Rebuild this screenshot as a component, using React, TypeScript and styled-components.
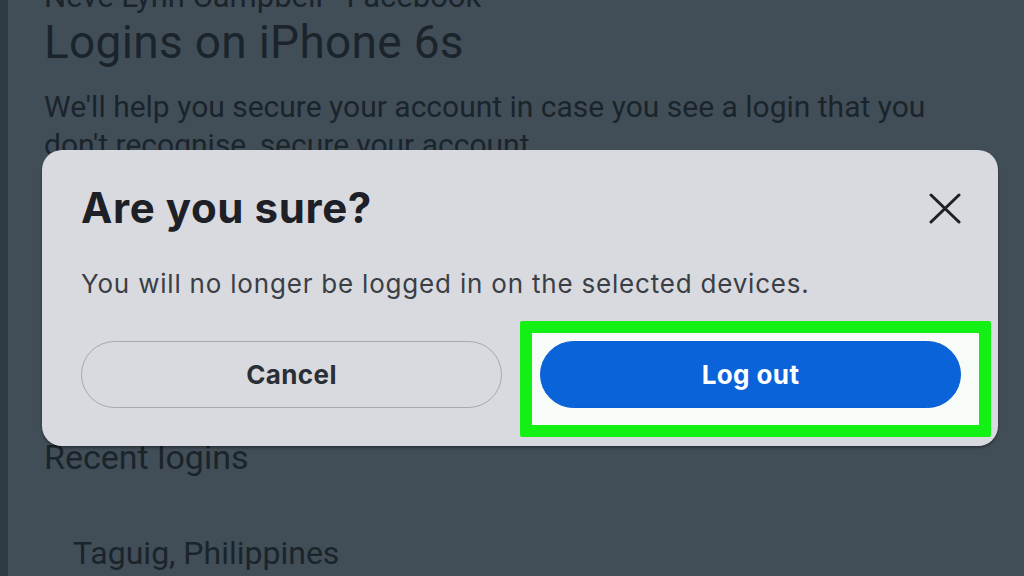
import React from 'react'
import styled, { createGlobalStyle } from 'styled-components'

const GlobalStyle = createGlobalStyle`
	html, body {
		margin: 0;
		padding: 0;
		background: #414e58;
	}
`

const Screen = styled.div`
	position: relative;
	width: 1024px;
	height: 576px;
	overflow: hidden;
	box-sizing: border-box;
	background: #414e58;
	border-left: 8px solid #2f3a42;
	font-family: Roboto, 'Liberation Sans', sans-serif;
	color: #1b242b;
`

const Page = styled.div`
	display: flex;
	flex-direction: column;
	padding-left: 36px;
`

const Breadcrumb = styled.div`
	font-size: 31px;
	line-height: 34px;
	margin-top: -20px;
	white-space: nowrap;
`

const PageTitle = styled.h1`
	margin: 2px 0 0;
	font-size: 46px;
	line-height: 52px;
	font-weight: 400;
	letter-spacing: 0.3px;
`

const Intro = styled.p`
	margin: 20px 0 0;
	width: 910px;
	font-size: 30px;
	line-height: 38px;
`

const Section = styled.h2<{ $indent?: number; $gap: number }>`
	margin: ${(p) => p.$gap}px 0 0 ${(p) => p.$indent || 0}px;
	font-size: ${(p) => (p.$indent ? 32 : 34)}px;
	line-height: 36px;
	font-weight: 400;
`

const Dialog = styled.div`
	position: absolute;
	left: 34px;
	top: 150px;
	width: 956px;
	height: 296px;
	box-sizing: border-box;
	padding: 34px 39px 38px;
	display: flex;
	flex-direction: column;
	background: #d9dadf;
	border-radius: 20px;
	box-shadow: 0 2px 3px rgba(0, 0, 0, 0.35);
	font-family: Inter, 'Liberation Sans', sans-serif;
	color: #1d2026;
`

const Header = styled.div`
	display: flex;
	align-items: center;
	justify-content: space-between;
`

const DialogTitle = styled.h2`
	margin: 0;
	font-size: 42px;
	line-height: 48px;
	font-weight: 700;
	letter-spacing: 0.6px;
`

const CloseButton = styled.button`
	display: flex;
	align-items: center;
	justify-content: center;
	width: 40px;
	height: 40px;
	margin-right: -6px;
	padding: 0;
	border: none;
	background: none;
	color: #1d2026;
`

const Message = styled.p`
	margin: 36px 0 0;
	font-size: 26px;
	line-height: 32px;
	letter-spacing: 0.8px;
	color: #3a3e45;
`

const Actions = styled.div`
	display: grid;
	grid-template-columns: 421px 421px;
	column-gap: 38px;
	margin-top: 41px;
`

const Slot = styled.div`
	position: relative;
	display: flex;
`

const Button = styled.button<{ $primary?: boolean }>`
	position: relative;
	z-index: 1;
	flex: 1;
	height: 67px;
	border-radius: 34px;
	border: 1px solid ${(p) => (p.$primary ? '#0a5fd4' : '#a6a9b0')};
	background: ${(p) => (p.$primary ? '#0b63da' : 'transparent')};
	color: ${(p) => (p.$primary ? '#ffffff' : '#2a2e35')};
	font-family: Inter, 'Liberation Sans', sans-serif;
	font-size: 26px;
	font-weight: 700;
	letter-spacing: 0.4px;
`

const Highlight = styled.div`
	position: absolute;
	left: -20px;
	top: -20px;
	right: -30px;
	bottom: -29px;
	box-sizing: border-box;
	border: 12px solid #12f014;
	background: #f7fcf9;
	border-radius: 2px;
`

const CloseIcon = () => (
	<svg width="32" height="32" viewBox="0 0 32 32" fill="none">
		<path
			d="M2 3 L30 30 M30 3 L2 30"
			stroke="currentColor"
			strokeWidth="3"
			strokeLinecap="round"
		/>
	</svg>
)

export default function App() {
	return (
		<Screen>
			<GlobalStyle />
			<Page>
				<Breadcrumb>Neve Lynn Campbell · Facebook</Breadcrumb>
				<PageTitle>Logins on iPhone 6s</PageTitle>
				<Intro>
					We'll help you secure your account in case you see a login that you
					don't recognise, secure your account.
				</Intro>
				<Section $gap={275}>Recent logins</Section>
				<Section $gap={60} $indent={29}>
					Taguig, Philippines
				</Section>
			</Page>
			<Dialog role="dialog">
				<Header>
					<DialogTitle>Are you sure?</DialogTitle>
					<CloseButton aria-label="Close">
						<CloseIcon />
					</CloseButton>
				</Header>
				<Message>You will no longer be logged in on the selected devices.</Message>
				<Actions>
					<Slot>
						<Button>Cancel</Button>
					</Slot>
					<Slot>
						<Highlight />
						<Button $primary>Log out</Button>
					</Slot>
				</Actions>
			</Dialog>
		</Screen>
	)
}
